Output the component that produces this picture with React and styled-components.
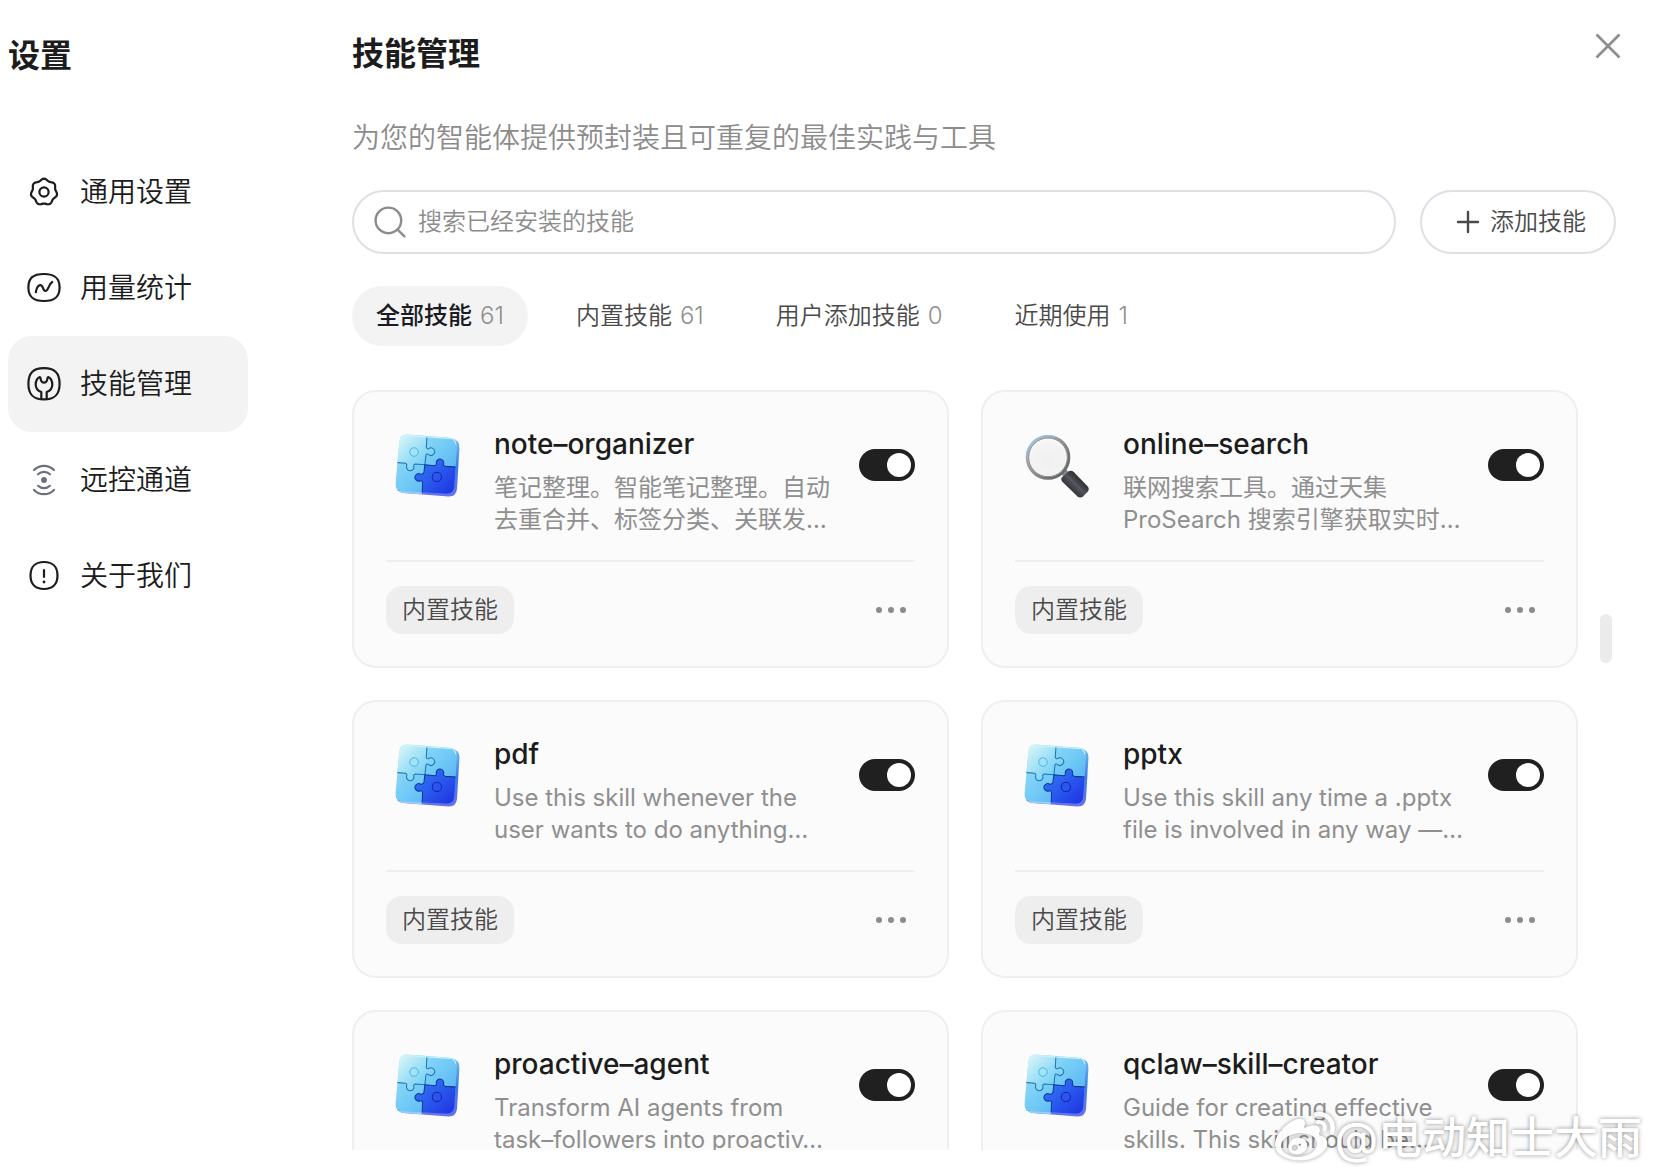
import React, { useState } from 'react';
import styled, { createGlobalStyle } from 'styled-components';
import { FaWeibo } from 'react-icons/fa';

const GlobalStyle = createGlobalStyle`
  * {
    box-sizing: border-box;
  }

  body {
    margin: 0;
    background: #fff;
    color: #1c1c1c;
    font-family: Inter, 'Noto Sans CJK SC', sans-serif;
    font-weight: 350;
  }

  button,
  input {
    font: inherit;
  }
`;

const Page = styled.div`
  display: flex;
  height: 100vh;
  padding-bottom: 26px;
  overflow: hidden;
`;

const Sidebar = styled.aside`
  flex: none;
  width: 248px;
  padding: 32px 0 0 8px;
`;

const Heading = styled.h1`
  margin: 0;
  font-size: 32px;
  line-height: 48px;
  font-weight: 600;
`;

const Nav = styled.nav`
  display: flex;
  flex-direction: column;
  margin-top: 64px;
`;

const NavItem = styled.a`
  display: flex;
  align-items: center;
  gap: 16px;
  height: 96px;
  padding: 0 16px;
  border-radius: 24px;
  background: ${(props) => (props.$active ? '#f3f3f3' : 'transparent')};
  color: #1c1c1c;
  font-size: 28px;
  line-height: 40px;
  text-decoration: none;
`;

const NavIcon = styled.svg`
  flex: none;
  width: 40px;
  height: 40px;
  fill: none;
  stroke: ${(props) => (props.$muted ? '#6b717c' : '#1c1c1c')};
  stroke-width: 2.2;
  stroke-linecap: round;
  stroke-linejoin: round;
`;

const Main = styled.main`
  flex: 1;
  min-width: 0;
  display: flex;
  flex-direction: column;
  padding: 30px 40px 0 104px;
`;

const TitleRow = styled.header`
  display: flex;
  justify-content: space-between;
  align-items: flex-start;
`;

const CloseButton = styled.button`
  display: flex;
  width: 32px;
  height: 32px;
  padding: 0;
  margin-right: -8px;
  border: none;
  background: none;
  color: #8c8c8c;
  cursor: pointer;
`;

const Subtitle = styled.p`
  margin: 40px 0 32px;
  color: #8c8c8c;
  font-size: 28px;
  line-height: 40px;
`;

const Toolbar = styled.div`
  display: flex;
  gap: 24px;
`;

const SearchBox = styled.label`
  flex: 1;
  display: flex;
  align-items: center;
  gap: 10px;
  height: 64px;
  padding: 0 20px;
  border: 2px solid #dde1e6;
  border-radius: 32px;
  color: #8c8c8c;
`;

const SearchInput = styled.input`
  flex: 1;
  min-width: 0;
  padding: 0;
  border: none;
  outline: none;
  background: none;
  color: #1c1c1c;
  font-size: 24px;
  line-height: 32px;

  &::placeholder {
    color: #8c8c8c;
    opacity: 1;
  }
`;

const AddButton = styled.button`
  display: flex;
  align-items: center;
  gap: 8px;
  height: 64px;
  padding: 0 28px 0 32px;
  border: 2px solid #dde1e6;
  border-radius: 32px;
  background: #fff;
  color: #4a4a4a;
  font-size: 24px;
  line-height: 32px;
  white-space: nowrap;
  cursor: pointer;
`;

const Tabs = styled.div`
  display: flex;
  gap: 24px;
  margin: 32px 0 44px;
`;

const Tab = styled.button`
  display: flex;
  align-items: center;
  gap: 8px;
  height: 60px;
  padding: 0 24px;
  border: none;
  border-radius: 30px;
  background: ${(props) => (props.$active ? '#f3f3f3' : 'transparent')};
  color: ${(props) => (props.$active ? '#1a1b24' : '#4a4a4a')};
  font-size: 24px;
  line-height: 32px;
  font-weight: ${(props) => (props.$active ? 500 : 350)};
  cursor: pointer;
`;

const TabCount = styled.span`
  color: #8f8f8f;
  font-weight: 350;
`;

const ListArea = styled.div`
  position: relative;
  flex: 1;
  min-height: 0;
  overflow: hidden;
`;

const SkillGrid = styled.div`
  display: grid;
  grid-template-columns: repeat(2, minmax(0, 1fr));
  gap: 32px;
  margin-right: 38px;
`;

const ScrollThumb = styled.div`
  position: absolute;
  top: 224px;
  right: 4px;
  width: 12px;
  height: 49px;
  border-radius: 6px;
  background: #ebebeb;
`;

const Card = styled.article`
  padding: 32px;
  border: 2px solid #efefef;
  border-radius: 24px;
  background: #fbfbfb;
`;

const CardHeader = styled.div`
  display: flex;
  align-items: flex-start;
  gap: 24px;
  padding-bottom: 24px;
  border-bottom: 2px solid #eee;
`;

const SkillIcon = styled.svg`
  flex: none;
  width: 84px;
  height: 82px;
`;

const CardText = styled.div`
  flex: 1;
  min-width: 0;
`;

const SkillName = styled.label`
  display: block;
  margin-bottom: 8px;
  font-size: 28px;
  line-height: 40px;
  font-weight: 500;
`;

const SkillDesc = styled.p`
  margin: 0;
  color: #8f8f8f;
  font-size: 24px;
  line-height: 32px;
  font-weight: 400;
  white-space: pre;
`;

const SwitchSlot = styled.div`
  display: flex;
  align-items: center;
  height: 82px;
`;

const Switch = styled.input`
  appearance: none;
  display: flex;
  width: 56px;
  height: 32px;
  margin: 0;
  padding: 4px;
  border-radius: 16px;
  background: #c8c8c8;
  cursor: pointer;

  &::before {
    content: '';
    width: 24px;
    height: 24px;
    border-radius: 50%;
    background: #fff;
  }

  &:checked {
    justify-content: flex-end;
    background: #202020;
  }
`;

const CardFooter = styled.div`
  display: flex;
  align-items: center;
  justify-content: space-between;
  margin-top: 24px;
`;

const Tag = styled.span`
  padding: 8px 16px;
  border-radius: 16px;
  background: #eee;
  color: #4a4a4a;
  font-size: 24px;
  line-height: 32px;
`;

const MoreButton = styled.button`
  display: flex;
  align-items: center;
  justify-content: center;
  gap: 6px;
  width: 48px;
  height: 48px;
  padding: 0;
  border: none;
  background: none;
  cursor: pointer;
`;

const Dot = styled.i`
  width: 6px;
  height: 6px;
  border-radius: 50%;
  background: #8c8c8c;
`;

const Watermark = styled.div`
  position: absolute;
  right: 14px;
  bottom: 8px;
  display: flex;
  align-items: center;
  color: #fff;
  font-size: 44px;
  line-height: 56px;
  font-weight: 500;
  text-shadow: 0 0 4px rgba(0, 0, 0, 0.45);
  pointer-events: none;

  svg {
    width: 60px;
    height: 60px;
    opacity: 0.95;
    filter: drop-shadow(0 0 2px rgba(0, 0, 0, 0.4));
  }
`;

// seven-lobed outline of the settings gear
const gearPath =
  Array.from({ length: 84 }, (_, i) => {
    const angle = (i / 84) * Math.PI * 2;
    const r = 12.4 + 0.9 * Math.cos(angle * 7);
    const x = 20 + r * Math.sin(angle);
    const y = 20 - r * Math.cos(angle);
    return `${i === 0 ? 'M' : 'L'}${x.toFixed(2)} ${y.toFixed(2)}`;
  }).join(' ') + 'Z';

const squircle = (x, y, w, h, k = 0.15) => {
  const r = x + w;
  const b = y + h;
  const cx = x + w / 2;
  const cy = y + h / 2;
  return `M${cx} ${y}C${r - w * k} ${y} ${r} ${y + h * k} ${r} ${cy}S${r - w * k} ${b} ${cx} ${b}S${x} ${b - h * k} ${x} ${cy}S${x + w * k} ${y} ${cx} ${y}Z`;
};

const GearIcon = () => (
  <NavIcon viewBox="0 0 40 40">
    <path d={gearPath} />
    <circle cx="20" cy="20" r="4.6" />
  </NavIcon>
);

const UsageIcon = () => (
  <NavIcon viewBox="0 0 40 40">
    <path d={squircle(4.4, 6, 31.2, 27)} />
    <path d="M11.8 24.2C12.6 19.8 14.4 17.2 16.4 17.2C19.2 17.2 18.8 23 21.4 23C24.4 23 24.6 16.2 28.2 14" />
  </NavIcon>
);

const SkillsIcon = () => (
  <NavIcon viewBox="0 0 40 40">
    <path d={squircle(4.4, 4.2, 31.2, 31.2)} />
    <path d="M17.3 35V28C13.7 26.6 11.7 24 11.7 20.4C11.7 16.8 13.6 13.7 15.4 13.2C16.8 12.9 16.4 15 17 16.4C17.6 17.9 18.6 18.7 20 18.7C21.4 18.7 22.4 17.9 23 16.4C23.6 15 23.2 12.9 24.6 13.2C26.4 13.7 28.3 16.8 28.3 20.4C28.3 24 26.3 26.6 22.7 28V35" />
  </NavIcon>
);

const RemoteIcon = () => (
  <NavIcon viewBox="0 0 40 40" $muted>
    <path d="M10 10C15.6 4.4 24.4 4.4 30 10M14 14.2C17.4 11 22.6 11 26 14.2M14 25.8C17.4 29 22.6 29 26 25.8M10 30C15.6 35.6 24.4 35.6 30 30" />
    <circle cx="20" cy="20" r="2.9" fill="#6b717c" stroke="none" />
  </NavIcon>
);

const AboutIcon = () => (
  <NavIcon viewBox="0 0 40 40">
    <path d={squircle(6.5, 6, 27, 27, 0.18)} />
    <path d="M20 14V21" />
    <circle cx="20" cy="26" r="1.4" fill="#1c1c1c" stroke="none" />
  </NavIcon>
);

const PuzzleIcon = () => (
  <SkillIcon viewBox="7 12 246 240" aria-hidden="true">
    <defs>
      <linearGradient id="pzBase" x1="0" y1="0" x2="1" y2="1">
        <stop offset="0" stopColor="#a5e4f7" />
        <stop offset="0.5" stopColor="#72caf6" />
        <stop offset="1" stopColor="#45a4f0" />
      </linearGradient>
      <linearGradient id="pzLight" x1="0" y1="0" x2="1" y2="1">
        <stop offset="0.15" stopColor="#d8f5f7" />
        <stop offset="0.6" stopColor="#92dbf6" />
        <stop offset="1" stopColor="#5cc3f4" />
      </linearGradient>
      <linearGradient id="pzDark" x1="0" y1="0" x2="1" y2="1">
        <stop offset="0" stopColor="#2f7df2" />
        <stop offset="0.4" stopColor="#2a5aee" />
        <stop offset="0.8" stopColor="#1f34e2" />
      </linearGradient>
      <linearGradient id="pzEdge" x1="0" y1="0" x2="0" y2="1">
        <stop offset="0" stopColor="#74bdf0" />
        <stop offset="0.5" stopColor="#3d7fe6" />
        <stop offset="1" stopColor="#6a70ea" />
      </linearGradient>
      <clipPath id="pzFace">
        <path d="M68 43L194 52Q216 54 215 76L207 196Q205 217 184 216L54 209Q34 207 35 187L46 63Q48 42 68 43Z" />
      </clipPath>
    </defs>
    <path
      d="M70 46L200 55Q223 58 222 82L215 202Q212 225 190 224L58 214Q36 211 37 190L48 66Q50 45 70 46Z"
      fill="url(#pzEdge)"
    />
    <path d="M37 190Q36 211 58 214L112 218V208H40Z" fill="#9ccdf5" />
    <g clipPath="url(#pzFace)">
      <rect x="30" y="40" width="190" height="180" fill="url(#pzBase)" />
      <path
        d="M30 30H128L125 80Q127 86 132 84A11 11 0 1 1 131 101Q126 98 124 103L121 131L93 129Q86 130 89 138A11 11 0 1 1 67 138Q70 128 64 127L30 124Z"
        fill="url(#pzLight)"
        stroke="#1d74ae"
        strokeWidth="3"
      />
      <path
        d="M121 131L150 134Q157 132 154 125A11 11 0 1 1 176 126Q174 135 181 136L230 139V240H112L114 184Q113 177 108 178A11 11 0 1 1 109 159Q115 160 118 154Z"
        fill="url(#pzDark)"
        stroke="#0f3596"
        strokeWidth="3"
      />
      <path d="M50 60Q54 46 70 46L194 54Q210 56 212 72" fill="none" stroke="#c9f2fb" strokeWidth="3" />
    </g>
    <circle cx="89" cy="94" r="12.5" fill="#a3e2f7" stroke="#35b2e4" strokeWidth="2.5" />
    <circle cx="156" cy="167" r="13.5" fill="#2a55ee" stroke="#1424a8" strokeWidth="3" />
  </SkillIcon>
);

const MagnifierIcon = () => (
  <SkillIcon viewBox="1 10 252 246" aria-hidden="true">
    <defs>
      <linearGradient id="mgRim" x1="0" y1="0" x2="1" y2="1">
        <stop offset="0" stopColor="#a9cdf2" />
        <stop offset="0.3" stopColor="#a6a8ab" />
        <stop offset="0.7" stopColor="#74777a" />
        <stop offset="1" stopColor="#595c5f" />
      </linearGradient>
      <radialGradient id="mgGlass" cx="0.5" cy="0.6" r="0.6">
        <stop offset="0" stopColor="#f0f0f1" />
        <stop offset="0.75" stopColor="#f4f4f5" />
        <stop offset="1" stopColor="#fff" />
      </radialGradient>
      <linearGradient id="mgHandle" x1="0" y1="1" x2="1" y2="0">
        <stop offset="0.2" stopColor="#202226" />
        <stop offset="0.5" stopColor="#505359" />
        <stop offset="0.8" stopColor="#1d1e21" />
      </linearGradient>
    </defs>
    <path d="M136 156L150 142L166 158L150 172Z" fill="#8b8e90" />
    <circle cx="100" cy="110" r="63" fill="url(#mgGlass)" stroke="url(#mgRim)" strokeWidth="8" />
    <circle cx="100" cy="110" r="58" fill="none" stroke="#56595c" strokeWidth="2" />
    <path d="M36 102A65 65 0 0 1 122 48" fill="none" stroke="#8fbdec" strokeWidth="3" />
    <path
      d="M142 170L162 152Q170 148 178 155L220 198Q225 205 219 213L206 227Q197 234 188 227L143 183Q137 176 142 170Z"
      fill="url(#mgHandle)"
    />
    <path d="M160 166L202 211" stroke="#63666c" strokeWidth="5" strokeLinecap="round" opacity="0.4" />
  </SkillIcon>
);

const navItems = [
  { id: 'general', label: '通用设置', Icon: GearIcon },
  { id: 'usage', label: '用量统计', Icon: UsageIcon },
  { id: 'skills', label: '技能管理', Icon: SkillsIcon },
  { id: 'remote', label: '远控通道', Icon: RemoteIcon },
  { id: 'about', label: '关于我们', Icon: AboutIcon },
];

const tabs = [
  { id: 'all', label: '全部技能', count: 61 },
  { id: 'builtin', label: '内置技能', count: 61 },
  { id: 'custom', label: '用户添加技能', count: 0 },
  { id: 'recent', label: '近期使用', count: 1 },
];

const skills = [
  { name: 'note–organizer', desc: '笔记整理。智能笔记整理。自动\n去重合并、标签分类、关联发…', Icon: PuzzleIcon },
  { name: 'online–search', desc: '联网搜索工具。通过天集\nProSearch 搜索引擎获取实时…', Icon: MagnifierIcon },
  { name: 'pdf', desc: 'Use this skill whenever the\nuser wants to do anything…', Icon: PuzzleIcon },
  { name: 'pptx', desc: 'Use this skill any time a .pptx\nfile is involved in any way —…', Icon: PuzzleIcon },
  { name: 'proactive–agent', desc: 'Transform AI agents from\ntask–followers into proactiv…', Icon: PuzzleIcon },
  { name: 'qclaw–skill–creator', desc: 'Guide for creating effective\nskills. This skill should be…', Icon: PuzzleIcon },
];

const SkillCard = ({ skill }) => {
  const [enabled, setEnabled] = useState(true);
  const { name, desc, Icon } = skill;

  return (
    <Card>
      <CardHeader>
        <Icon />
        <CardText>
          <SkillName htmlFor={`switch-${name}`}>{name}</SkillName>
          <SkillDesc>{desc}</SkillDesc>
        </CardText>
        <SwitchSlot>
          <Switch
            id={`switch-${name}`}
            type="checkbox"
            checked={enabled}
            onChange={() => setEnabled(!enabled)}
          />
        </SwitchSlot>
      </CardHeader>
      <CardFooter>
        <Tag>内置技能</Tag>
        <MoreButton type="button" aria-label="更多">
          <Dot />
          <Dot />
          <Dot />
        </MoreButton>
      </CardFooter>
    </Card>
  );
};

function App() {
  const [activeNav, setActiveNav] = useState('skills');
  const [activeTab, setActiveTab] = useState('all');
  const [keyword, setKeyword] = useState('');

  return (
    <>
      <GlobalStyle />
      <Page>
        <Sidebar>
          <Heading>设置</Heading>
          <Nav>
            {navItems.map(({ id, label, Icon }) => (
              <NavItem
                key={id}
                href={`#${id}`}
                $active={id === activeNav}
                onClick={() => setActiveNav(id)}
              >
                <Icon />
                {label}
              </NavItem>
            ))}
          </Nav>
        </Sidebar>
        <Main>
          <TitleRow>
            <Heading as="h2">技能管理</Heading>
            <CloseButton type="button" aria-label="关闭">
              <svg width="32" height="32" viewBox="0 0 32 32" stroke="currentColor" strokeWidth="2.6">
                <path d="M4.5 4.5L27.5 27.5M27.5 4.5L4.5 27.5" />
              </svg>
            </CloseButton>
          </TitleRow>
          <Subtitle>为您的智能体提供预封装且可重复的最佳实践与工具</Subtitle>
          <Toolbar>
            <SearchBox>
              <svg width="34" height="34" viewBox="0 0 34 34" fill="none" stroke="currentColor" strokeWidth="2.4" strokeLinecap="round">
                <circle cx="14.4" cy="15.4" r="12.8" />
                <path d="M23.6 24.6L30.4 31.4" />
              </svg>
              <SearchInput
                type="text"
                aria-label="搜索技能"
                placeholder="搜索已经安装的技能"
                value={keyword}
                onChange={(e) => setKeyword(e.target.value)}
              />
            </SearchBox>
            <AddButton type="button">
              <svg width="28" height="28" viewBox="0 0 28 28" stroke="currentColor" strokeWidth="2.4" strokeLinecap="round">
                <path d="M14 4V24M4 14H24" />
              </svg>
              添加技能
            </AddButton>
          </Toolbar>
          <Tabs>
            {tabs.map((tab) => (
              <Tab
                key={tab.id}
                type="button"
                $active={tab.id === activeTab}
                onClick={() => setActiveTab(tab.id)}
              >
                {tab.label}
                <TabCount>{tab.count}</TabCount>
              </Tab>
            ))}
          </Tabs>
          <ListArea>
            <SkillGrid>
              {skills.map((skill) => (
                <SkillCard key={skill.name} skill={skill} />
              ))}
            </SkillGrid>
            <ScrollThumb />
          </ListArea>
        </Main>
      </Page>
      <Watermark>
        <FaWeibo />
        <span>@电动知士大雨</span>
      </Watermark>
    </>
  );
}

export default App;
